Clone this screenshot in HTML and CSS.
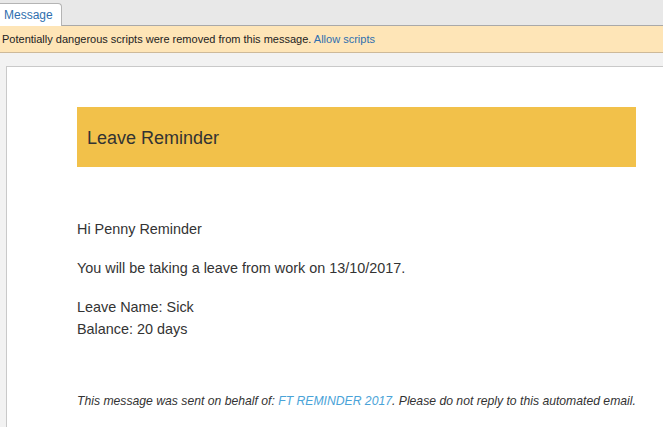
FILE: index.html
```html
<!DOCTYPE html>
<html>
<head>
    <title>Message</title>
    <link rel="stylesheet" href="styles.css">
</head>
<body>

    <!-- tabs -->
    <div class="tabs">
        <span class="tab">Message</span>
    </div>

    <!-- script warning -->
    <div class="warning">
        Potentially dangerous scripts were removed from this message. <a href="#">Allow scripts</a>
    </div>

    <!-- message body -->
    <div class="viewer">
        <div class="mail">
            <div class="mail-head">Leave Reminder</div>

            <div class="mail-body">
                <p>Hi Penny Reminder</p>
                <p>You will be taking a leave from work on 13/10/2017.</p>
                <p>Leave Name: Sick<br>Balance: 20 days</p>
            </div>

            <p class="mail-foot">This message was sent on behalf of: <a href="#">FT REMINDER 2017</a>. Please do not reply to this automated email.</p>
        </div>
    </div>

</body>
</html>
```

FILE: styles.css
```css
html, body { height: 100%; }
body { margin: 0; font-family: "Liberation Sans", Arial, sans-serif; background-color: #f2f2f2; overflow: hidden; }
a { text-decoration: none; }

/* tabs */
.tabs { height: 25px; background-color: #e8e8e8; border-bottom: 1px solid #a9a9a9; display: flex; align-items: flex-end; }
.tab { background-color: #fff; height: 23px; width: 62px; margin-bottom: -1px; border: 1px solid #b4b4b4; border-left: none; border-bottom: none; border-top-right-radius: 4px; font-size: 12px; line-height: 23px; padding-left: 4px; box-sizing: border-box; color: #2f6fae; }

/* warning bar */
.warning { height: 26px; line-height: 26px; background-color: #fee5b7; border-bottom: 1px solid #cdb999; font-size: 11px; color: #222; padding-left: 2px; }
.warning a { color: #2f6fae; }

/* message */
.viewer { padding: 13px 0 0 6px; }
.mail { background-color: #fff; border-top: 1px solid #c9c9c9; border-left: 1px solid #c9c9c9; padding: 40px 27px 40px 70px; }
.mail-head { background-color: #f2c14a; height: 60px; line-height: 62px; padding-left: 10px; font-size: 18px; color: #333; }
.mail-body { padding-top: 51px; font-size: 14.4px; line-height: 22px; color: #333; }
.mail-body p { margin: 0 0 17px; }
.mail-foot { margin: 52px 0 0; font-size: 12.2px; line-height: 18px; font-style: italic; color: #333; }
.mail-foot a { color: #4aa3d8; }
```
